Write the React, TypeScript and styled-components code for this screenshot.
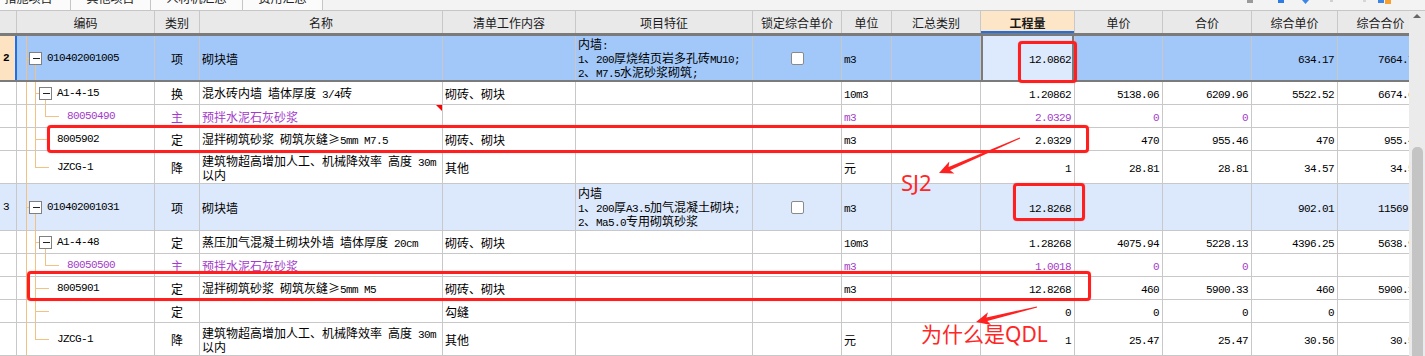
import React from "react";
import styled, { createGlobalStyle, css } from "styled-components";

const GlobalStyle = createGlobalStyle`
  html, body { margin: 0; padding: 0; background: #fff; }
  body { width: 1425px; height: 356px; overflow: hidden; }
`;

type Align = "left" | "center" | "right";
type Seg = "full" | "top" | "bottom";

interface TreeSpec {
  level: 1 | 2 | 3;
  box?: boolean;
  l1?: Seg;
  l2?: Seg;
}

interface RowData {
  h: number;
  kind?: "selected" | "item";
  num?: string;
  tree: TreeSpec;
  code: string;
  type: string;
  name: string;
  work?: string;
  feat?: string;
  lock?: boolean;
  unit?: string;
  qty?: string;
  price?: string;
  total?: string;
  cprice?: string;
  ctotal?: string;
  purple?: boolean;
  note?: boolean;
}

const WIDTHS = [17, 138, 45, 243, 133, 177, 89, 50, 89, 94, 88, 89, 86, 86];
const TEMPLATE = WIDTHS.map((w) => `${w}px`).join(" ");
const PURPLE = "#a33cc9";
const GRID = "#c8c8c8";
const DARK = "#7b7b7b";

const HEADERS = [
  "",
  "编码",
  "类别",
  "名称",
  "清单工作内容",
  "项目特征",
  "锁定综合单价",
  "单位",
  "汇总类别",
  "工程量",
  "单价",
  "合价",
  "综合单价",
  "综合合价",
];

const ROWS: RowData[] = [
  {
    h: 49,
    kind: "selected",
    num: "2",
    tree: { level: 1, box: true, l1: "bottom" },
    code: "010402001005",
    type: "项",
    name: "砌块墙",
    feat: "内墙:\n1、200厚烧结页岩多孔砖MU10;\n2、M7.5水泥砂浆砌筑;",
    lock: true,
    unit: "m3",
    qty: "12.0862",
    cprice: "634.17",
    ctotal: "7664.71",
  },
  {
    h: 23,
    tree: { level: 2, box: true, l1: "full", l2: "bottom" },
    code: "A1-4-15",
    type: "换",
    name: "混水砖内墙 墙体厚度 3/4砖",
    work: "砌砖、砌块",
    unit: "10m3",
    qty: "1.20862",
    price: "5138.06",
    total: "6209.96",
    cprice: "5522.52",
    ctotal: "6674.63",
  },
  {
    h: 23,
    purple: true,
    note: true,
    tree: { level: 3, l1: "full", l2: "top" },
    code: "80050490",
    type: "主",
    name: "预拌水泥石灰砂浆",
    unit: "m3",
    qty: "2.0329",
    price: "0",
    total: "0",
  },
  {
    h: 23,
    tree: { level: 2, l1: "full" },
    code: "8005902",
    type: "定",
    name: "湿拌砌筑砂浆 砌筑灰缝≥5mm M7.5",
    work: "砌砖、砌块",
    unit: "m3",
    qty: "2.0329",
    price: "470",
    total: "955.46",
    cprice: "470",
    ctotal: "955.46",
  },
  {
    h: 33,
    tree: { level: 2, l1: "top" },
    code: "JZCG-1",
    type: "降",
    name: "建筑物超高增加人工、机械降效率 高度 30m\n以内",
    work: "其他",
    unit: "元",
    qty: "1",
    price: "28.81",
    total: "28.81",
    cprice: "34.57",
    ctotal: "34.57",
  },
  {
    h: 47,
    kind: "item",
    num: "3",
    tree: { level: 1, box: true, l1: "bottom" },
    code: "010402001031",
    type: "项",
    name: "砌块墙",
    feat: "内墙\n1、200厚A3.5加气混凝土砌块;\n2、Ma5.0专用砌筑砂浆",
    lock: true,
    unit: "m3",
    qty: "12.8268",
    cprice: "902.01",
    ctotal: "11569.9",
  },
  {
    h: 23,
    tree: { level: 2, box: true, l1: "full", l2: "bottom" },
    code: "A1-4-48",
    type: "定",
    name: "蒸压加气混凝土砌块外墙 墙体厚度 20cm",
    work: "砌砖、砌块",
    unit: "10m3",
    qty: "1.28268",
    price: "4075.94",
    total: "5228.13",
    cprice: "4396.25",
    ctotal: "5638.96",
  },
  {
    h: 23,
    purple: true,
    tree: { level: 3, l1: "full", l2: "top" },
    code: "80050500",
    type: "主",
    name: "预拌水泥石灰砂浆",
    unit: "m3",
    qty: "1.0018",
    price: "0",
    total: "0",
  },
  {
    h: 23,
    tree: { level: 2, l1: "full" },
    code: "8005901",
    type: "定",
    name: "湿拌砌筑砂浆 砌筑灰缝≥5mm M5",
    work: "砌砖、砌块",
    unit: "m3",
    qty: "12.8268",
    price: "460",
    total: "5900.33",
    cprice: "460",
    ctotal: "5900.33",
  },
  {
    h: 23,
    tree: { level: 2, l1: "full" },
    code: "",
    type: "定",
    name: "",
    work: "勾缝",
    qty: "0",
    price: "0",
    total: "0",
    cprice: "0",
  },
  {
    h: 33,
    tree: { level: 2, l1: "top" },
    code: "JZCG-1",
    type: "降",
    name: "建筑物超高增加人工、机械降效率 高度 30m\n以内",
    work: "其他",
    unit: "元",
    qty: "1",
    price: "25.47",
    total: "25.47",
    cprice: "30.56",
    ctotal: "30.56",
  },
];

/* ---------- styled parts ---------- */

const Page = styled.div`
  position: relative;
  width: 1425px;
  height: 356px;
  overflow: hidden;
  background: #fff;
  font-family: "Noto Sans CJK SC", sans-serif;
  font-size: 12px;
  color: #000;
`;

const TabBar = styled.div`
  display: flex;
  height: 10px;
  border-bottom: 1px solid #c6c6c6;
  background: #f3f3f3;
  overflow: hidden;
`;

const Tab = styled.div<{ $w: number; $pr?: number }>`
  flex: none;
  width: ${(p) => p.$w}px;
  box-sizing: border-box;
  padding-right: ${(p) => p.$pr ?? 0}px;
  border-right: 1px solid #c6c6c6;
  background: #fbfbfb;
  display: flex;
  justify-content: center;
  overflow: hidden;
`;

const TabLabel = styled.span`
  display: block;
  margin-top: -8px;
  line-height: 12px;
  font-size: 12px;
  color: #222;
  white-space: nowrap;
`;

const ToolIcons = styled.svg`
  flex: none;
  margin-left: auto;
  margin-right: 25px;
`;

const Body = styled.div`
  display: flex;
  height: 345px;
`;

const Viewport = styled.div`
  flex: none;
  width: 1409px;
  overflow: hidden;
`;

const Grid = styled.div`
  width: 1424px;
`;

const HeaderRow = styled.div`
  display: grid;
  grid-template-columns: ${TEMPLATE};
  height: 22px;
  background: #e9e9e9;
`;

const HeaderCell = styled.div<{ $active?: boolean }>`
  display: flex;
  align-items: center;
  justify-content: center;
  box-sizing: border-box;
  border-right: 1px solid ${GRID};
  color: #1a1a1a;
  white-space: nowrap;
  overflow: hidden;
  ${(p) =>
    p.$active &&
    css`
      background: #fde6c7;
      font-weight: 700;
      box-shadow: inset 0 -2px 0 #1f6fe6;
    `}
`;

const Row = styled.div<{ $h: number; $selected?: boolean; $bg?: string }>`
  display: grid;
  grid-template-columns: ${TEMPLATE};
  height: ${(p) => p.$h}px;
  box-sizing: border-box;
  border-bottom: 1px solid ${GRID};
  background: ${(p) => p.$bg ?? "#fff"};
  ${(p) =>
    p.$selected &&
    css`
      border-top: 3px solid ${DARK};
      border-bottom: 2px solid ${DARK};
    `}
`;

const Cell = styled.div<{
  $align?: Align;
  $color?: string;
  $lh?: number;
  $note?: boolean;
}>`
  position: relative;
  display: flex;
  align-items: center;
  justify-content: ${(p) =>
    p.$align === "right" ? "flex-end" : p.$align === "center" ? "center" : "flex-start"};
  padding: ${(p) =>
    p.$align === "right" ? "0 3px 0 0" : p.$align === "center" ? "0" : "0 0 0 2px"};
  box-sizing: border-box;
  border-right: 1px solid ${GRID};
  color: ${(p) => p.$color ?? "#000"};
  line-height: ${(p) => p.$lh ?? 13}px;
  overflow: hidden;
  min-width: 0;
  ${(p) =>
    p.$note &&
    css`
      &::after {
        content: "";
        position: absolute;
        top: 0;
        right: 0;
        border-top: 6px solid #f00;
        border-left: 6px solid transparent;
      }
    `}
`;

const NumCell = styled(Cell)<{ $selected?: boolean }>`
  padding-left: 3px;
  ${(p) =>
    p.$selected &&
    css`
      background: #fde3c1;
      border-right: 2px solid #1f6fe8;
      font-weight: 700;
    `}
`;

const CodeCell = styled(Cell)`
  padding: 0;
  align-items: stretch;
`;

const QtyCell = styled(Cell)<{ $focus?: boolean }>`
  ${(p) =>
    p.$focus &&
    css`
      background: #dde9fc;
      box-shadow: inset 2px 0 0 ${DARK}, inset -2px 0 0 ${DARK};
    `}
`;

const CodeText = styled.span`
  display: flex;
  align-items: center;
  white-space: pre;
`;

const CellText = styled.span`
  display: block;
  white-space: pre;
`;

const Latin = styled.span`
  font-family: "Liberation Mono", monospace;
  font-size: 11px;
  line-height: 9px;
  letter-spacing: -0.6px;
`;

const CheckBox = styled.span`
  display: block;
  width: 13px;
  height: 13px;
  box-sizing: border-box;
  border: 1px solid #8a8a8a;
  border-radius: 2px;
  background: #fff;
`;

const ScrollBar = styled.div`
  flex: none;
  width: 16px;
  background: #ebebeb;
  display: flex;
  flex-direction: column;
  align-items: center;
`;

const ScrollUp = styled.div`
  margin-top: 3px;
  width: 0;
  height: 0;
  border-left: 4px solid transparent;
  border-right: 4px solid transparent;
  border-bottom: 4px solid #666;
`;

const Thumb = styled.div`
  margin-top: 129px;
  width: 11px;
  flex: 1;
  background: #c4c4c4;
  border-radius: 5px 5px 0 0;
`;

const RedBox = styled.div<{ $x: number; $y: number; $w: number; $h: number }>`
  position: absolute;
  left: ${(p) => p.$x}px;
  top: ${(p) => p.$y}px;
  width: ${(p) => p.$w}px;
  height: ${(p) => p.$h}px;
  box-sizing: border-box;
  border: 3px solid #ff1f1f;
  border-radius: 4px;
  box-shadow: 0 0 1px rgba(255, 0, 0, 0.6);
  pointer-events: none;
`;

const Remark = styled.div<{ $x: number; $y: number; $size: number }>`
  position: absolute;
  left: ${(p) => p.$x}px;
  top: ${(p) => p.$y}px;
  font-family: "Noto Sans", "Noto Sans CJK SC", sans-serif;
  font-size: ${(p) => p.$size}px;
  line-height: 1;
  color: #ff2626;
  white-space: nowrap;
  pointer-events: none;
`;

const ArrowLayer = styled.svg`
  position: absolute;
  left: 0;
  top: 0;
  pointer-events: none;
`;

/* ---------- helpers ---------- */

const renderText = (s: string) => {
  const parts: React.ReactNode[] = [];
  const re = /[\x20-\x7e]+/g;
  let last = 0;
  let i = 0;
  let m: RegExpExecArray | null;
  while ((m = re.exec(s))) {
    if (m.index > last) parts.push(s.slice(last, m.index));
    parts.push(<Latin key={i++}>{m[0]}</Latin>);
    last = m.index + m[0].length;
  }
  if (last < s.length) parts.push(s.slice(last));
  return parts;
};

const TREE = "#f3c283";

const vSeg = (x: number, seg: Seg | undefined, cy: number, h: number, boxBottom: number) => {
  if (!seg) return null;
  const [y1, y2] =
    seg === "full" ? [0, h] : seg === "top" ? [0, cy] : [boxBottom, h];
  return <line x1={x} y1={y1} x2={x} y2={y2} stroke={TREE} />;
};

const ExpandBox = ({ x, cy }: { x: number; cy: number }) => (
  <g>
    <rect x={x} y={cy - 6} width={12} height={12} fill="#fff" stroke="#808080" />
    <line x1={x + 3} y1={cy} x2={x + 10} y2={cy} stroke="#222" />
  </g>
);

const TreeGuide = ({ spec, h }: { spec: TreeSpec; h: number }) => {
  const cy = Math.floor(h / 2) + 0.5;
  const X0 = 9.5;
  const X1 = 18.5;
  const X2 = 28.5;
  const w = spec.level === 1 ? 30 : spec.level === 2 ? 40 : 50;
  const boxBottom = cy + 6;
  return (
    <svg width={w} height={h} shapeRendering="crispEdges" style={{ flex: "none" }}>
      <line x1={X0} y1={0} x2={X0} y2={h} stroke={TREE} />
      {spec.level === 1 && (
        <>
          <line x1={X0} y1={cy} x2={12.5} y2={cy} stroke={TREE} />
          {vSeg(X1, spec.l1, cy, h, boxBottom)}
          <ExpandBox x={12.5} cy={cy} />
        </>
      )}
      {spec.level === 2 && (
        <>
          {vSeg(X1, spec.l1, cy, h, boxBottom)}
          {spec.box ? (
            <>
              <line x1={X1} y1={cy} x2={22.5} y2={cy} stroke={TREE} />
              {vSeg(X2, spec.l2, cy, h, boxBottom)}
              <ExpandBox x={22.5} cy={cy} />
            </>
          ) : (
            <line x1={X1} y1={cy} x2={32} y2={cy} stroke={TREE} />
          )}
        </>
      )}
      {spec.level === 3 && (
        <>
          {vSeg(X1, spec.l1, cy, h, boxBottom)}
          {vSeg(X2, spec.l2, cy, h, boxBottom)}
          <line x1={X2} y1={cy} x2={42} y2={cy} stroke={TREE} />
        </>
      )}
    </svg>
  );
};

const arrowPoints = (
  tx: number,
  ty: number,
  hx: number,
  hy: number,
  L = 14,
  W = 6.5,
  w0 = 0.6,
  w1 = 1.8
) => {
  const dx = hx - tx;
  const dy = hy - ty;
  const len = Math.hypot(dx, dy);
  const ux = dx / len;
  const uy = dy / len;
  const nx = -uy;
  const ny = ux;
  const bx = hx - ux * L;
  const by = hy - uy * L;
  const nbx = hx - ux * (L * 0.8);
  const nby = hy - uy * (L * 0.8);
  const pts = [
    [tx + nx * w0, ty + ny * w0],
    [nbx + nx * w1, nby + ny * w1],
    [bx + nx * W, by + ny * W],
    [hx, hy],
    [bx - nx * W, by - ny * W],
    [nbx - nx * w1, nby - ny * w1],
    [tx - nx * w0, ty - ny * w0],
  ];
  return pts.map((p) => p.map((v) => v.toFixed(1)).join(",")).join(" ");
};

/* ---------- rows ---------- */

const DataRow = ({ r }: { r: RowData }) => {
  const selected = r.kind === "selected";
  const bg = selected ? "#a2c8f9" : r.kind === "item" ? "#dce8fb" : "#fff";
  const contentH = selected ? r.h - 5 : r.h - 1;
  const color = r.purple ? PURPLE : "#000";
  const num = (v?: string) => (v ? <CellText>{renderText(v)}</CellText> : null);
  return (
    <Row $h={r.h} $selected={selected} $bg={bg}>
      <NumCell $selected={selected}>
        {r.num ? <Latin>{r.num}</Latin> : null}
      </NumCell>
      <CodeCell $color={color}>
        <TreeGuide spec={r.tree} h={contentH} />
        <CodeText>{renderText(r.code)}</CodeText>
      </CodeCell>
      <Cell $align="center" $color={color}>
        <CellText>{r.type}</CellText>
      </Cell>
      <Cell $color={color} $note={r.note}>
        <CellText>{renderText(r.name)}</CellText>
      </Cell>
      <Cell>{r.work ? <CellText>{renderText(r.work)}</CellText> : null}</Cell>
      <Cell $lh={13.5}>{r.feat ? <CellText>{renderText(r.feat)}</CellText> : null}</Cell>
      <Cell $align="center">{r.lock ? <CheckBox /> : null}</Cell>
      <Cell $color={color}>{r.unit ? <CellText>{renderText(r.unit)}</CellText> : null}</Cell>
      <Cell />
      <QtyCell $align="right" $color={color} $focus={selected}>
        {num(r.qty)}
      </QtyCell>
      <Cell $align="right" $color={color}>
        {num(r.price)}
      </Cell>
      <Cell $align="right" $color={color}>
        {num(r.total)}
      </Cell>
      <Cell $align="right">{num(r.cprice)}</Cell>
      <Cell $align="right">{num(r.ctotal)}</Cell>
    </Row>
  );
};

const TABS = [
  { label: "措施项目", w: 71, pr: 13 },
  { label: "其他项目", w: 80 },
  { label: "人材机汇总", w: 92 },
  { label: "费用汇总", w: 80 },
];

export default function App() {
  return (
    <Page>
      <GlobalStyle />
      <TabBar>
        {TABS.map((t) => (
          <Tab key={t.label} $w={t.w} $pr={t.pr}>
            <TabLabel>{t.label}</TabLabel>
          </Tab>
        ))}
        <ToolIcons width={160} height={10} viewBox="0 0 160 10">
          <rect x={7} y={0} width={6} height={3} fill="#9a9a9a" />
          <rect x={38} y={0} width={6} height={3} fill="#2d7be5" />
          <polygon points="62,0 69,0 65.5,4" fill="#3d86e8" />
          <rect x={90} y={0} width={3} height={2} fill="#d0d0d0" />
          <rect x={123} y={0} width={3} height={2} fill="#d6d6d6" />
          <rect x={138} y={0} width={6} height={3} fill="#3a85e6" />
          <rect x={145} y={0} width={6} height={4} fill="#f5a030" />
        </ToolIcons>
      </TabBar>
      <Body>
        <Viewport>
          <Grid>
            <HeaderRow>
              {HEADERS.map((h, i) => (
                <HeaderCell key={i} $active={h === "工程量"}>
                  {h}
                </HeaderCell>
              ))}
            </HeaderRow>
            {ROWS.map((r, i) => (
              <DataRow key={i} r={r} />
            ))}
          </Grid>
        </Viewport>
        <ScrollBar>
          <ScrollUp />
          <Thumb />
        </ScrollBar>
      </Body>

      <RedBox $x={1018} $y={41} $w={59} $h={42} />
      <RedBox $x={47} $y={125} $w={1042} $h={28} />
      <RedBox $x={1013} $y={183} $w={72} $h={38} />
      <RedBox $x={27} $y={271} $w={1064} $h={30} />
      <ArrowLayer width={1425} height={356}>
        <polygon points={arrowPoints(1020, 138, 939, 173)} fill="#ff2020" />
        <polygon points={arrowPoints(1037, 307, 976, 322)} fill="#ff2020" />
      </ArrowLayer>
      <Remark $x={901} $y={171} $size={22}>
        SJ2
      </Remark>
      <Remark $x={921} $y={324} $size={21}>
        为什么是QDL
      </Remark>
    </Page>
  );
}
